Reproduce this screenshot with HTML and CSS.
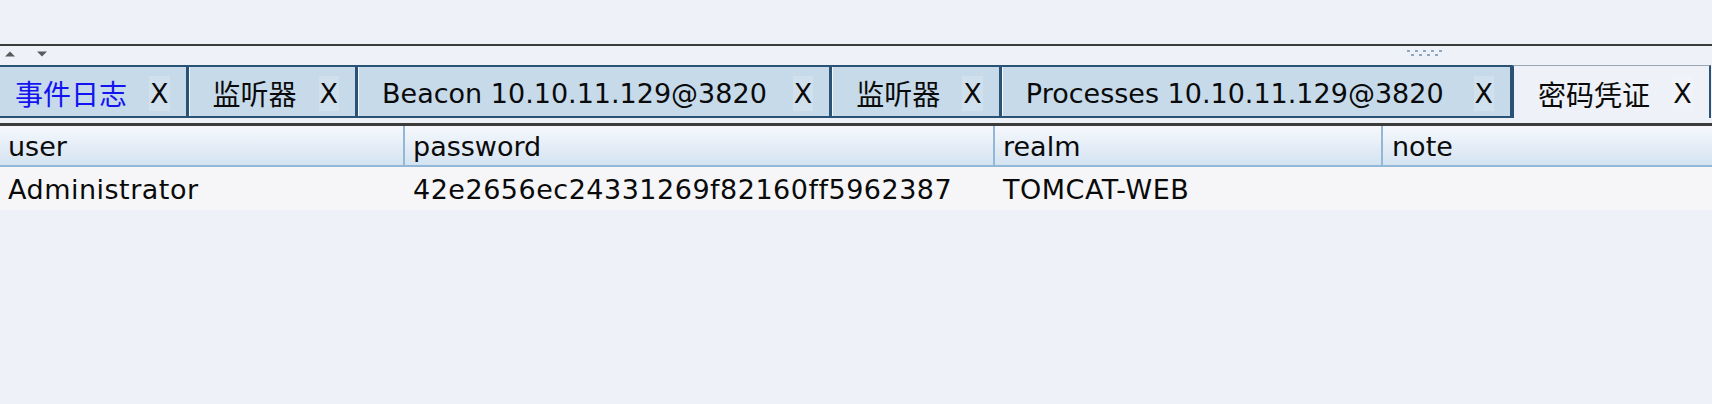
FILE: index.html
```html
<!DOCTYPE html>
<html lang="zh">
<head>
<meta charset="utf-8">
<title>密码凭证</title>
<link rel="stylesheet" href="styles.css">
</head>
<body>
<div class="app">
  <div class="top-space"></div>
  <div class="rule-top"></div>
  <div class="strip">
    <div class="arrows">
      <svg class="arrow" width="12" height="6" viewBox="0 0 12 6"><path d="M1 5.5 L6 0.5 L11 5.5 Z" fill="#5a5a5a"/></svg>
      <svg class="arrow" width="12" height="6" viewBox="0 0 12 6"><path d="M1 0.5 L11 0.5 L6 5.5 Z" fill="#5a5a5a"/></svg>
    </div>
    <svg class="grip" width="38" height="7" viewBox="0 0 38 7">
      <g fill="#8ea6bf">
        <rect x="0" y="0" width="3" height="2"/><rect x="8" y="0" width="3" height="2"/><rect x="16" y="0" width="3" height="2"/><rect x="24" y="0" width="3" height="2"/><rect x="32" y="0" width="3" height="2"/>
        <rect x="4" y="4" width="3" height="2"/><rect x="12" y="4" width="3" height="2"/><rect x="20" y="4" width="3" height="2"/><rect x="28" y="4" width="3" height="2"/>
      </g>
    </svg>
  </div>
  <div class="tabs">
    <div class="tab tab-first"><span class="label label-cjk label-blue">事件日志</span><span class="close">X</span></div>
    <div class="tab"><span class="label label-cjk">监听器</span><span class="close">X</span></div>
    <div class="tab"><span class="label">Beacon 10.10.11.129@3820</span><span class="close">X</span></div>
    <div class="tab"><span class="label label-cjk">监听器</span><span class="close">X</span></div>
    <div class="tab"><span class="label label-wide">Processes 10.10.11.129@3820</span><span class="close">X</span></div>
    <div class="tab tab-active"><span class="label label-cjk">密码凭证</span><span class="close">X</span></div>
  </div>
  <div class="rule-mid"></div>
  <div class="table">
    <div class="thead">
      <div class="th">user</div>
      <div class="th">password</div>
      <div class="th">realm</div>
      <div class="th th-last">note</div>
    </div>
    <div class="tr">
      <div class="td">Administrator</div>
      <div class="td">42e2656ec24331269f82160ff5962387</div>
      <div class="td">TOMCAT-WEB</div>
      <div class="td"></div>
    </div>
  </div>
</div>
</body>
</html>
```
FILE: styles.css
```css
html, body {
  margin: 0;
  padding: 0;
  background: #eef1f8;
}
body {
  font-family: "DejaVu Sans", "Noto Sans CJK SC", sans-serif;
  font-size: 27px;
  color: #0a0a0a;
  width: 1712px;
  height: 404px;
  overflow: hidden;
}
.app {
  display: flex;
  flex-direction: column;
}
.top-space {
  height: 44px;
}
.rule-top {
  height: 2px;
  background: #3c3c3c;
}
.strip {
  height: 19px;
  display: flex;
  align-items: flex-start;
}
.arrows {
  display: flex;
  gap: 20px;
  padding: 5px 0 0 4px;
}
.arrow {
  display: block;
}
.grip {
  display: block;
  margin: 4px 267px 0 auto;
}
.tabs {
  display: flex;
  height: 53px;
  overflow: hidden;
  border-bottom: 2px solid transparent;
}
.tab {
  display: flex;
  align-items: center;
  box-sizing: border-box;
  height: 53px;
  padding: 3px 16px 0 24px;
  background: #c6daea;
  border-top: 2px solid #2a5274;
  border-bottom: 2px solid #2a5274;
  border-left: 1px solid #2a5274;
  border-right: 2px solid #2a5274;
  box-shadow: inset 1px 0 0 #f4f8fc;
  white-space: nowrap;
  flex-shrink: 0;
}
.tab-first {
  margin-left: -10px;
}
.tab-active {
  background: #eef1f8;
  border-top: 1px solid #9aa6b2;
  border-bottom: none;
  border-left: 2px solid #2a5274;
  box-shadow: none;
}
.label {
  margin-right: 26px;
}
.label-wide {
  margin-right: 30px;
}
.label-cjk {
  font-size: 28px;
  margin-right: 22px;
}
.label-blue {
  color: #1414f0;
}
.close {
  display: inline-block;
  padding: 4px 1px;
  background: rgba(255, 255, 255, 0.18);
  line-height: 1;
}
.rule-mid {
  height: 3px;
  margin-top: 3px;
  background: #3c3c3c;
}
.table {
  display: flex;
  flex-direction: column;
}
.thead, .tr {
  display: grid;
  grid-template-columns: 405px 590px 388px 1fr;
}
.thead {
  height: 39px;
  background: linear-gradient(#f6f8fd, #d4e3f1);
  border-bottom: 2px solid #93b7d7;
}
.th {
  display: flex;
  align-items: center;
  padding: 1px 0 0 8px;
  border-right: 2px solid #93b7d7;
}
.th-last {
  border-right: none;
  padding-left: 9px;
}
.tr {
  height: 43px;
  background: #f6f6f8;
}
.td {
  display: flex;
  align-items: center;
  padding: 2px 0 0 8px;
  letter-spacing: 0.5px;
}
```
